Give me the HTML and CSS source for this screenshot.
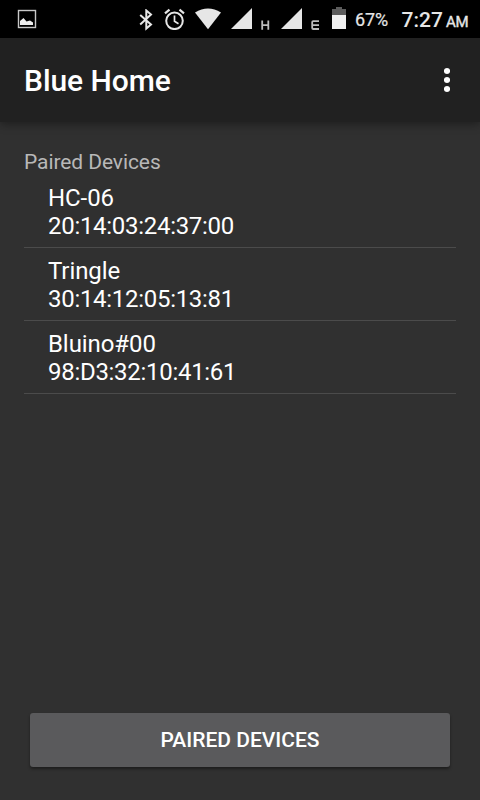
FILE: index.html
```html
<!DOCTYPE html>
<html lang="en">
<head>
<meta charset="utf-8">
<title>Blue Home</title>
<link rel="stylesheet" href="styles.css">
</head>
<body>
<div class="screen">
  <header class="status">
    <svg class="picture" width="20" height="20" viewBox="0 0 20 20"><rect x="1.500" y="1.500" width="17" height="17" fill="none" stroke="#c8c8c8" stroke-width="1.400"/><path d="M3 16V12L6.500 9 9.500 12.500 13 11.500 16 13.500V16Z" fill="#eee"/></svg>
    <svg class="bluetooth" width="14" height="22" viewBox="0 0 14 22"><path d="M1.200 6 12 15.500 7.300 19.500V1.500L12 5.500 1.200 15.500" fill="none" stroke="#e6e6e6" stroke-width="2"/></svg>
    <svg class="alarm" width="22" height="22" viewBox="0 0 22 22" fill="none" stroke="#e6e6e6"><circle cx="10.500" cy="12.800" r="8.300" stroke-width="2"/><path d="M10.500 7.500V13.300L14.500 15.700" stroke-width="1.700"/><path d="M1 5.300 5.500 1.600M15.500 1.600 20 5.300" stroke-width="2.200"/></svg>
    <svg class="wifi" width="26" height="22" viewBox="0 0 26 22"><path d="M0 4.500Q13-3.500 26 4.500L13 21.300Z" fill="#e6e6e6"/></svg>
    <svg class="signal" width="22" height="22" viewBox="0 0 22 22"><path d="M0 21 21 0V21Z" fill="#e6e6e6"/></svg>
    <svg class="network" width="9" height="11" viewBox="0 0 9 11"><path d="M1.200 0.500V9.700M7.300 0.500V9.700M1.200 5.200H7.300" fill="none" stroke="#bdbdbd" stroke-width="1.800"/></svg>
    <svg class="signal" width="22" height="22" viewBox="0 0 22 22"><path d="M0 21 21 0V21Z" fill="#e6e6e6"/></svg>
    <svg class="network" width="9" height="11" viewBox="0 0 9 11"><path d="M8 1.200H2.200Q1.200 1.200 1.200 2.200V8Q1.200 9 2.200 9H8M1.200 5.100H8" fill="none" stroke="#bdbdbd" stroke-width="1.800"/></svg>
    <svg class="battery" width="14" height="22" viewBox="0 0 14 22"><path d="M0 8V2H4V0H10V2H14V8Z" fill="#5c5c5c"/><path d="M0 8H14V22H0Z" fill="#f0f0f0"/></svg>
    <span class="percent">67%</span>
    <span class="clock">7:27</span><span class="meridiem">AM</span>
  </header>
  <div class="appbar">
    <h1>Blue Home</h1>
    <svg width="6" height="26" viewBox="0 0 6 26" fill="#fff"><circle cx="3" cy="4" r="3.100"/><circle cx="3" cy="13" r="3.100"/><circle cx="3" cy="22" r="3.100"/></svg>
  </div>
  <main>
    <h2>Paired Devices</h2>
    <ul>
      <li>HC-06<span class="address">20:14:03:24:37:00</span></li>
      <li>Tringle<span class="address">30:14:12:05:13:81</span></li>
      <li>Bluino#00<span class="address">98:D3:32:10:41:61</span></li>
    </ul>
    <button type="button">PAIRED DEVICES</button>
  </main>
</div>
</body>
</html>
```

FILE: styles.css
```css
* { box-sizing: border-box; }
body { margin: 0; background: #303030; color: #fff; font-family: Roboto, sans-serif; }
.screen { width: 480px; height: 800px; display: flex; flex-direction: column; overflow: hidden; }
svg { display: block; flex: none; }
.status { height: 38px; background: #000; display: flex; align-items: flex-start; padding-left: 17px; color: #e6e6e6; white-space: nowrap; }
.picture { margin-top: 9px; }
.bluetooth { margin: 9px 0 0 102px; }
.alarm { margin: 8px 0 0 11px; }
.wifi { margin: 8px 0 0 8.500px; }
.signal { margin: 8px 0 0 10.500px; }
.network { margin: 20px 0 0 8px; }
.battery { margin: 7px 0 0 12.500px; }
.percent { width: 34px; margin: 9px 0 0 9px; font-size: 18px; line-height: 22px; letter-spacing: -0.150px; -webkit-text-stroke: 0.200px #e6e6e6; }
.clock { width: 42px; margin: 8px 0 0 12.500px; font-size: 21px; line-height: 25px; font-weight: 500; }
.meridiem { margin: 12px 0 0 2.500px; font-size: 15px; line-height: 20px; letter-spacing: -0.300px; -webkit-text-stroke: 0.400px #e6e6e6; }
.appbar { height: 84px; flex: none; background: #212121; box-shadow: 0 2px 9px rgba(0, 0, 0, .4); display: flex; align-items: center; justify-content: space-between; padding: 0 30px 0 24px; }
h1 { margin: 2px 0 0; font-size: 30px; line-height: 36px; font-weight: 500; letter-spacing: -0.050px; }
main { flex: 1; display: flex; flex-direction: column; padding: 26px 24px 33px; }
h2 { margin: 0; font-size: 21px; line-height: 28px; font-weight: 400; letter-spacing: -0.080px; color: #b8b8b8; }
ul { list-style: none; margin: 0; padding: 0; }
li { height: 73px; padding: 9px 24px 0; border-bottom: 1px solid #4b4b4b; font-size: 24px; line-height: 28px; letter-spacing: -0.080px; }
li:first-child { height: 72px; padding-top: 8px; }
.address { display: block; letter-spacing: -0.290px; }
button { height: 54px; margin: auto 6px 0; padding: 1px 0 0; border: 0; border-radius: 3px; background: #5a5a5c; color: #fff; box-shadow: 0 2px 3px rgba(0, 0, 0, .4); font: 500 21px/53px Roboto, sans-serif; }
```
